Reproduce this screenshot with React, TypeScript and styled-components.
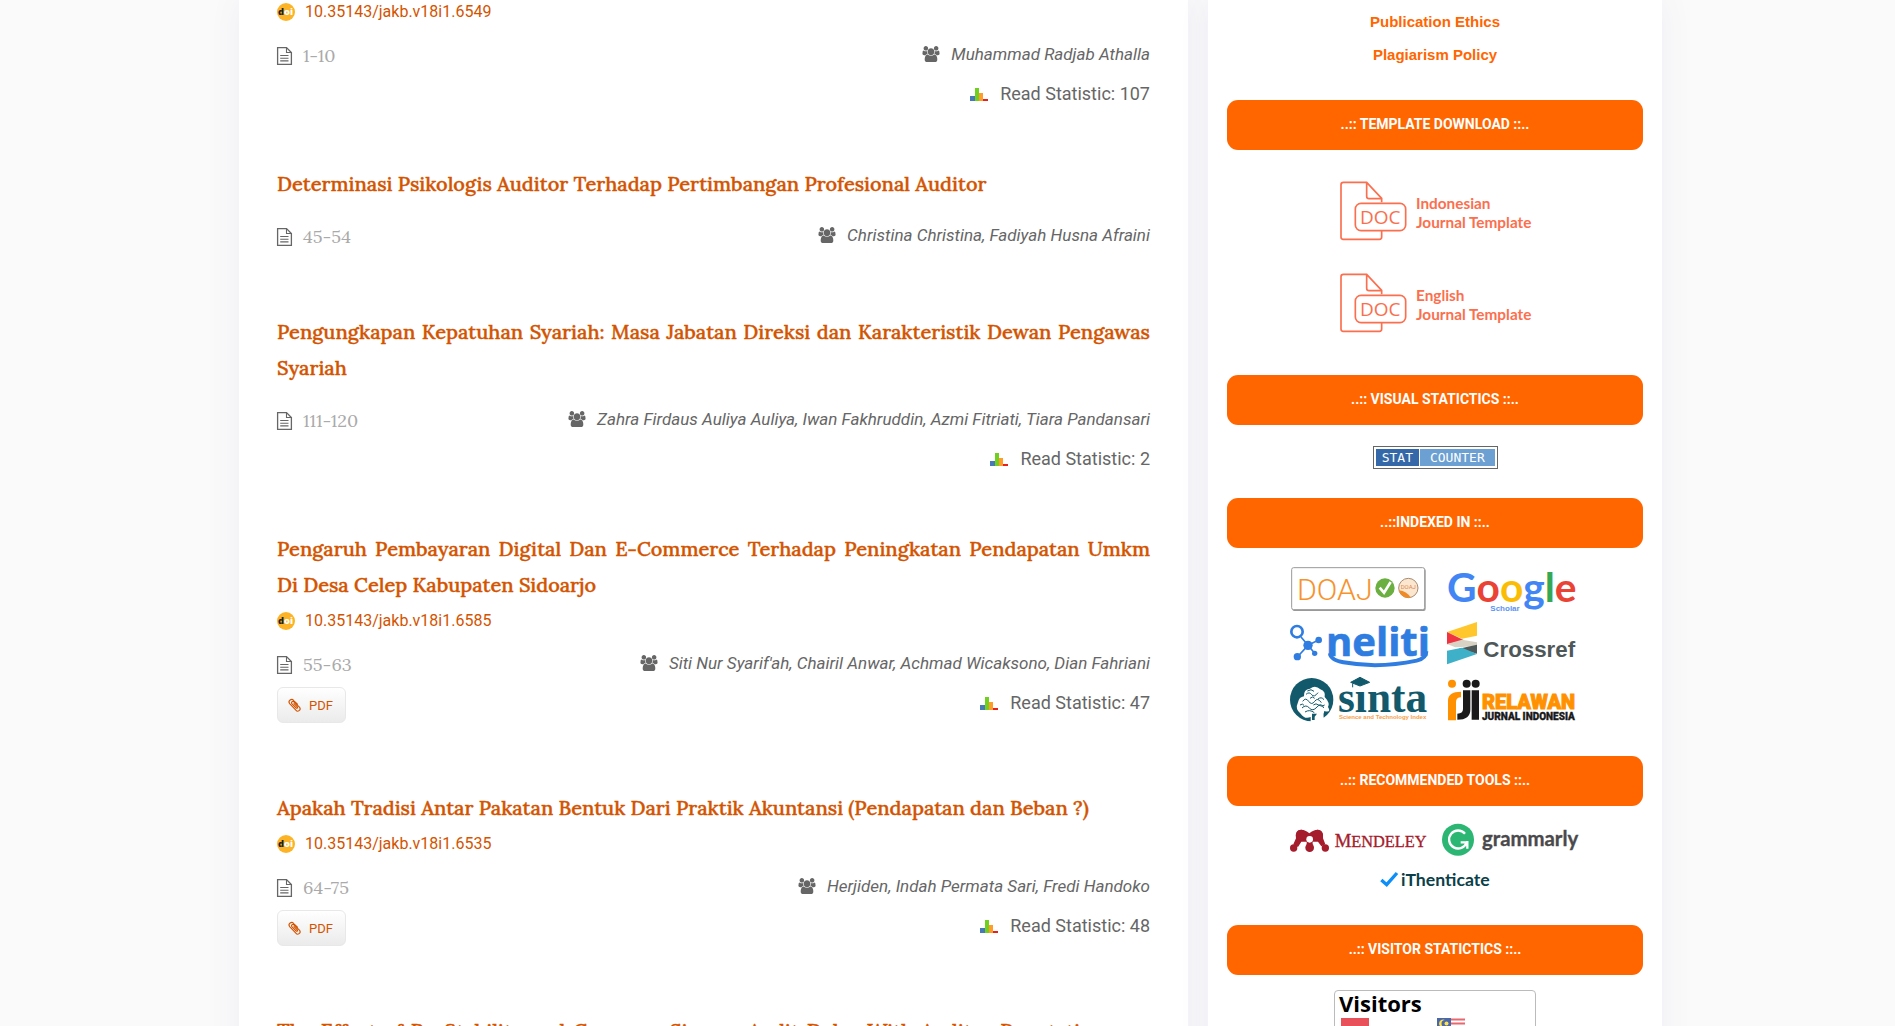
import React from "react";
import styled, { createGlobalStyle } from "styled-components";

const GlobalStyle = createGlobalStyle`
  * { box-sizing: border-box; }
  body {
    margin: 0;
    background: #fafafa;
    color: #666;
    font-family: Roboto, "Liberation Sans", sans-serif;
  }
  a { text-decoration: none; }
  svg { display: block; overflow: visible; }
`;

const Page = styled.div`
  height: 100vh;
  overflow: hidden;
  padding-left: 6px;
`;

const Columns = styled.div`
  display: grid;
  grid-template-columns: 949fr 454fr;
  gap: 20px;
  max-width: 1423px;
  min-height: 100%;
  margin: 0 auto;
`;

const Main = styled.main`
  background: #fff;
  padding: 0 38px;
  box-shadow: 0 0 30px rgba(80, 80, 180, 0.07);
`;

const Sidebar = styled.aside`
  background: #fff;
  padding: 5px 19px 0;
  box-shadow: 0 0 30px rgba(80, 80, 180, 0.07);
`;

const Article = styled.article`
  margin-bottom: 52px;
`;

const Title = styled.h3`
  margin: 0;
  font: 500 20px/36px Lora, "Liberation Serif", serif;
  -webkit-text-stroke: 0.4px #d35400;
  text-align: justify;
  a { color: #d35400; }
`;

const Doi = styled.a`
  display: flex;
  align-items: center;
  gap: 10px;
  padding-top: 9px;
  font-size: 16px;
  line-height: 18px;
  color: #d35400;
  &:first-child { padding-top: 3px; }
`;

const Meta = styled.div`
  display: flex;
  justify-content: space-between;
  margin-top: 21px;
`;

const Pages = styled.div`
  display: flex;
  align-items: center;
  gap: 11px;
  font: 18px/28px Lora, "Liberation Serif", serif;
  color: #aaa;
`;

const PdfLink = styled.a`
  display: flex;
  align-items: center;
  gap: 8px;
  width: 69px;
  height: 36px;
  margin: 8px 0 15px;
  padding-left: 10px;
  border: 1px solid #e8e8e8;
  border-radius: 6px;
  background: linear-gradient(#fff, #ebebeb);
  font-size: 13px;
  color: #d35400;
`;

const Credits = styled.div`
  display: flex;
  flex-direction: column;
  align-items: flex-end;
`;

const Authors = styled.div`
  display: flex;
  align-items: center;
  gap: 11px;
  padding-bottom: 15px;
  font-size: 17px;
  font-style: italic;
  line-height: 24px;
`;

const ReadCount = styled.div`
  display: flex;
  align-items: center;
  gap: 12px;
  padding-bottom: 7px;
  font-size: 18px;
  line-height: 26px;
`;

const PolicyLink = styled.a`
  display: block;
  font: 700 15px/33px Arial, "Liberation Sans", sans-serif;
  text-align: center;
  color: #f60;
`;

const BlockTitle = styled.h2`
  margin: 0;
  padding-bottom: 2px;
  border-radius: 11px;
  background: #f60;
  font-size: 14px;
  line-height: 48px;
  font-weight: 700;
  text-align: center;
  color: #fff;
`;

const Block = styled.section<{ $top: number; $body: number }>`
  margin-top: ${(p) => p.$top}px;
  ${BlockTitle} { margin-bottom: ${(p) => p.$body}px; }
`;

const Templates = styled.div`
  display: flex;
  flex-direction: column;
  align-items: center;
  gap: 32px;
`;

const StatBadge = styled.a`
  display: flex;
  gap: 1px;
  width: 125px;
  height: 23px;
  margin: 0 auto;
  padding: 2px;
  border: 1px solid #666;
  font: 13px/17px "DejaVu Sans Mono", "Liberation Mono", monospace;
  text-align: center;
  color: #fff;
`;

const BadgePart = styled.span<{ $bg: string; $grow: number }>`
  flex: ${(p) => p.$grow} 1 0;
  background: ${(p) => p.$bg};
`;

const LogoGrid = styled.div`
  display: grid;
  grid-template-columns: 138px 138px;
  justify-content: center;
  gap: 10px 14px;
`;

const ToolRow = styled.div`
  display: flex;
  flex-wrap: wrap;
  justify-content: center;
  gap: 13px 14px;
  max-width: 320px;
  margin: 0 auto;
`;

const Visitors = styled.div`
  width: 202px;
  margin: 0 auto;
  padding: 0 4px;
  border: 1px solid #bbb;
  border-radius: 4px;
  color: #000;
  font: 700 22px/25px "Open Sans", "Noto Sans", sans-serif;
`;

const Flags = styled.div`
  display: grid;
  grid-template-columns: 96px 96px;
  padding: 2px 2px 0;
`;

const DoiIcon = () => (
  <svg width="18" height="18" viewBox="0 0 54 54" aria-hidden="true">
    <circle cx="27" cy="27" r="27" fill="#fcb426" />
    <text x="3" y="36" fontFamily="Open Sans, sans-serif" fontWeight="800" fontSize="28" fill="#231f20">
      d<tspan fill="#fff">oi</tspan>
    </text>
  </svg>
);

const FileIcon = () => (
  <svg width="15" height="18" viewBox="0 0 15 18" fill="none" stroke="#666" aria-hidden="true">
    <path d="M.6 .6H9.5L14.4 5.5V17.4H.6Z" strokeWidth="1.3" />
    <path d="M9.5 .6V5.5H14.4M3.2 8.5H11.5M3.2 11.2H11.5M3.2 13.9H11.5" strokeWidth="1.1" />
  </svg>
);

const ClipIcon = () => (
  <svg width="13" height="13" viewBox="0 0 24 24" fill="none" stroke="#d35400" strokeWidth="2" strokeLinecap="round" aria-hidden="true">
    <path d="M17.500 9.500L10.500 2.800A4 4 0 0 0 3 8.500L14.500 20.500A4.300 4.300 0 0 0 21.500 15.500L11 5.500A2.400 2.400 0 0 0 7 8.500L15.500 17A1.500 1.500 0 0 0 17.500 15L11 8.500" />
  </svg>
);

const UsersIcon = () => (
  <svg width="18" height="16" viewBox="0 -256 1920 1792" fill="#666" aria-hidden="true">
    <path d="M593 640q-162 5-265 128h-134q-82 0-138-40.5t-56-118.5q0-353 124-353 6 0 43.5 21t97.5 42.5 119 21.5q67 0 133-23-5 37-5 66 0 139 81 256zm1071 637q0 120-73 189.5t-194 69.5h-874q-121 0-194-69.5t-73-189.5q0-53 3.5-103.5t14-109 26.5-108.5 43-97.5 62-81 85.5-53.5 111.5-20q10 0 43 21.5t73 48 107 48 135 21.5 135-21.5 107-48 73-48 43-21.5q61 0 111.5 20t85.5 53.5 62 81 43 97.5 26.5 108.5 14 109 3.5 103.5zm-1024-1277q0 106-75 181t-181 75-181-75-75-181 75-181 181-75 181 75 75 181zm704 384q0 159-112.5 271.5t-271.5 112.5-271.5-112.5-112.5-271.5 112.5-271.5 271.5-112.5 271.5 112.5 112.5 271.5zm576 225q0 78-56 118.5t-138 40.5h-134q-103-123-265-128 81-117 81-256 0-29-5-66 66 23 133 23 59 0 119-21.5t97.5-42.5 43.5-21q124 0 124 353zm-128-609q0 106-75 181t-181 75-181-75-75-181 75-181 181-75 181 75 75 181z" />
  </svg>
);

const ChartIcon = () => (
  <svg width="18" height="13" viewBox="0 0 18 13" aria-hidden="true">
    <path d="M0 8h5v5H0z" fill="#4878b8" />
    <path d="M5 0h4v13H5z" fill="#6fd01f" />
    <path d="M9 5h4v8H9z" fill="#ff9c2a" />
    <path d="M13 11h5v2h-5z" fill="#e8201c" />
  </svg>
);

const DocLogo = ({ first }: { first: string }) => (
  <svg width="190" height="60" viewBox="0 0 570 180" fill="none" stroke="#fb6f4e" strokeWidth="5" role="img">
    <path d="M125 64V52L80 4H10Q3 4 3 11V168Q3 175 10 175H118Q125 175 125 168V150M80 4V46Q80 53 87 53H125" />
    <rect x="46" y="67" width="151" height="82" rx="17" />
    <g fill="#fb6f4e" stroke="none">
      <text x="60" y="129" fontFamily="Open Sans, sans-serif" fontSize="57">DOC</text>
      <g fontFamily="Lato, sans-serif" fontWeight="700" fontSize="46">
        <text x="228" y="84">{first}</text>
        <text x="228" y="140">Journal Template</text>
      </g>
    </g>
  </svg>
);

const Doaj = () => (
  <svg width="138" height="45" viewBox="0 0 414 135">
    <rect x="7" y="5" width="400" height="127" rx="6" fill="#999" />
    <rect x="5" y="2" width="399" height="126" rx="6" fill="#fff" stroke="#999" strokeWidth="3" />
    <text x="21" y="98" fontFamily="Roboto, sans-serif" fontWeight="300" fontSize="91" fill="#f7922c">DOAJ</text>
    <circle cx="285" cy="63" r="29" fill="#6aaf3f" />
    <path d="M269 62L282 77L302 45" fill="none" stroke="#fff" strokeWidth="8" />
    <circle cx="355" cy="63" r="29" fill="#fbe6d0" stroke="#a98a70" strokeWidth="3" />
    <path d="M327 70Q350 72 362 92Q334 96 327 70Z" fill="#f08a24" />
    <text x="332" y="66" fontFamily="Roboto, sans-serif" fontSize="18" fill="#e08a4c">DOAJ</text>
  </svg>
);

const Google = () => (
  <svg width="138" height="45" viewBox="0 0 414 135">
    <text x="15" y="104" fontFamily="Lato, sans-serif" fontWeight="700" fontSize="122" fill="#4285f4">
      G<tspan fill="#ea4335">o</tspan><tspan fill="#fbbc05">o</tspan>g<tspan fill="#34a853">l</tspan><tspan fill="#ea4335">e</tspan>
    </text>
    <text x="145" y="133" fontFamily="Liberation Sans, sans-serif" fontWeight="700" fontSize="24" fill="#5b93f5">Scholar</text>
  </svg>
);

const Neliti = () => (
  <svg width="138" height="45" viewBox="0 0 414 135" fill="#2f7de1">
    <g stroke="#2f7de1" fill="none">
      <path d="M33 45L54 70L86 54M54 70L22 105M54 70L74 94" strokeWidth="5" />
      <circle cx="21" cy="29" r="17" strokeWidth="8" />
      <path d="M120 94Q122 114 160 121Q265 140 380 116Q409 109 409 88" strokeWidth="12" />
    </g>
    <circle cx="54" cy="70" r="14" /><circle cx="86" cy="54" r="10" />
    <circle cx="22" cy="104" r="11" /><circle cx="74" cy="94" r="8" />
    <text x="108" y="101" fontFamily="Open Sans, sans-serif" fontWeight="700" fontSize="120" stroke="#2f7de1" strokeWidth="2">neliti</text>
  </svg>
);

const Crossref = () => (
  <svg width="138" height="45" viewBox="0 0 414 135">
    <path d="M15 30L105 0V41L60 50L15 30Z" fill="#ffc72c" />
    <path d="M15 30L66 55L15 67Z" fill="#ef3340" />
    <path d="M60 53L105 61V73L40 76L15 66Z" fill="#d8d2c4" />
    <path d="M105 68V95L50 80Z" fill="#4f5858" />
    <path d="M15 86L60 77L105 96L15 127Z" fill="#3eb1c8" />
    <text x="124" y="104" fontFamily="Liberation Sans, sans-serif" fontWeight="700" fontSize="67" fill="#4f5858">Crossref</text>
  </svg>
);

const Sinta = () => (
  <svg width="138" height="45" viewBox="0 0 414 135">
    <circle cx="65" cy="68" r="65" fill="#11596b" />
    <path d="M24 76Q27 60 42 58Q40 37 60 35Q76 22 91 37Q108 44 104 60Q121 78 114 90Q125 108 103 102Q96 120 108 135H62V120Q44 128 32 110Q14 97 24 76Z" fill="#fff" />
    <path d="M38 73q9-13 18 0t18 0 20 4M48 52q10-9 17 1t19-6M36 93q12-12 22 0t23-3 20 3M60 64q8-8 14 0M45 105q14-9 28 2M52 42q12-8 20 1M84 66q10-8 18 2M30 84q8-6 12 1M70 84q8-7 16 0t18 0" fill="none" stroke="#11596b" strokeWidth="3" />
    <path d="M66 110h15l-7 9v10h-8z" fill="#11596b" />
    <text x="144" y="106" fontFamily="Liberation Serif, serif" fontWeight="700" fontSize="130" fill="#11596b">sınta</text>
    <path d="M182 16L210 1L239 16L210 27ZM188 19V31" fill="#11596b" stroke="#11596b" strokeWidth="3" />
    <text x="147" y="125" fontFamily="Liberation Sans, sans-serif" fontWeight="700" fontSize="18" fill="#f7a04a">Science and Technology Index</text>
  </svg>
);

const Relawan = () => (
  <svg width="138" height="45" viewBox="0 0 414 135">
    <circle cx="30" cy="20" r="12" fill="#ff9100" />
    <path d="M18 130V70Q18 44 57 44V61Q42 61 42 76V130Z" fill="#ff9100" />
    <g fill="#1a1a1a">
      <circle cx="74" cy="20" r="12" /><circle cx="101" cy="20" r="12" />
      <path d="M63 40H85V98Q85 128 46 128V110Q63 110 63 96ZM89 40H111V128H89Z" />
      <text x="120" y="129" fontFamily="Roboto, sans-serif" fontWeight="900" fontSize="30" stroke="#1a1a1a">JURNAL INDONESIA</text>
    </g>
    <text x="120" y="95" fontFamily="Roboto, sans-serif" fontWeight="900" fontSize="60" fill="#ff9100" stroke="#ff9100" strokeWidth="3">RELAWAN</text>
  </svg>
);

const Mendeley = () => (
  <svg width="138" height="35" viewBox="0 0 414 105" fill="#a51c2c">
    <path d="M18 46Q14 20 33 20Q46 20 58 31Q70 20 84 20Q101 22 99 46L106 64L94 70L84 56L68 56V76H50V56L34 56L24 72L10 64Z" />
    <circle cx="34" cy="36" r="16" /><circle cx="83" cy="36" r="16" />
    <circle cx="11" cy="75" r="11" /><circle cx="59" cy="74" r="13" /><circle cx="106" cy="75" r="11" />
    <circle cx="59" cy="49" r="10" fill="#fff" />
    <text x="134" y="72" fontFamily="Liberation Serif, serif" fontSize="56" stroke="#a51c2c">M<tspan fontSize="49">ENDELEY</tspan></text>
  </svg>
);

const Grammarly = () => (
  <svg width="138" height="35" viewBox="0 0 414 105">
    <circle cx="48" cy="50" r="48" fill="#2bb673" />
    <path d="M69 32A27 27 0 1 0 74 58H56M76 54V77" fill="none" stroke="#fff" strokeWidth="7" />
    <text x="120" y="68" fontFamily="Lato, sans-serif" fontWeight="700" fontSize="61" fill="#4a4a4c" stroke="#4a4a4c">grammarly</text>
  </svg>
);

const IThenticate = () => (
  <svg width="111" height="18" viewBox="0 0 333 54">
    <path d="M4 27L20 41L51 6" fill="none" stroke="#0c8ff8" strokeWidth="10" />
    <text x="63" y="44" fontFamily="Lato, sans-serif" fontWeight="700" fontSize="53" fill="#0b3f49">iThenticate</text>
  </svg>
);

const IndonesiaFlag = () => (
  <svg width="28" height="19" viewBox="0 0 28 19">
    <path d="M0 0h28v10H0z" fill="#e8505a" /><path d="M0 10h28v9H0z" fill="#f4f4f4" />
  </svg>
);

const MalaysiaFlag = () => (
  <svg width="28" height="19" viewBox="0 0 28 19">
    <path d="M0 0h28v19H0z" fill="#fff" />
    <path d="M0 1.5h28M0 5.5h28M0 9.500h28M0 13.500h28M0 17.500h28" stroke="#e8686e" strokeWidth="2" />
    <path d="M0 0h14v11H0z" fill="#4a68a8" />
    <path d="M8 2A4 4 0 1 0 8 9A3.500 3.500 0 1 1 8 2Z" fill="#ffe04a" /><circle cx="9.500" cy="5.500" r="2" fill="#ffe04a" />
  </svg>
);

type Entry = { title?: string; doi?: string; pages: string; authors: string; reads?: number; pdf?: boolean };

const entries: Entry[] = [
  { doi: "10.35143/jakb.v18i1.6549", pages: "1-10", authors: "Muhammad Radjab Athalla", reads: 107 },
  { title: "Determinasi Psikologis Auditor Terhadap Pertimbangan Profesional Auditor", pages: "45-54", authors: "Christina Christina, Fadiyah Husna Afraini" },
  { title: "Pengungkapan Kepatuhan Syariah: Masa Jabatan Direksi dan Karakteristik Dewan Pengawas Syariah", pages: "111-120", authors: "Zahra Firdaus Auliya Auliya, Iwan Fakhruddin, Azmi Fitriati, Tiara Pandansari", reads: 2 },
  { title: "Pengaruh Pembayaran Digital Dan E-Commerce Terhadap Peningkatan Pendapatan Umkm Di Desa Celep Kabupaten Sidoarjo", doi: "10.35143/jakb.v18i1.6585", pages: "55-63", authors: "Siti Nur Syarif'ah, Chairil Anwar, Achmad Wicaksono, Dian Fahriani", reads: 47, pdf: true },
  { title: "Apakah Tradisi Antar Pakatan Bentuk Dari Praktik Akuntansi (Pendapatan dan Beban ?)", doi: "10.35143/jakb.v18i1.6535", pages: "64-75", authors: "Herjiden, Indah Permata Sari, Fredi Handoko", reads: 48, pdf: true },
];

const ArticleSummary = ({ entry }: { entry: Entry }) => (
  <Article>
    {entry.title && <Title><a href="#article">{entry.title}</a></Title>}
    {entry.doi && <Doi href="#doi"><DoiIcon />{entry.doi}</Doi>}
    <Meta>
      <div>
        <Pages><FileIcon />{entry.pages}</Pages>
        {entry.pdf && <PdfLink href="#pdf"><ClipIcon />PDF</PdfLink>}
      </div>
      <Credits>
        <Authors><UsersIcon />{entry.authors}</Authors>
        {entry.reads !== undefined && <ReadCount><ChartIcon />Read Statistic: {entry.reads}</ReadCount>}
      </Credits>
    </Meta>
  </Article>
);

export default function App() {
  return (
    <>
      <GlobalStyle />
      <Page>
        <Columns>
          <Main>
            {entries.map((entry) => <ArticleSummary key={entry.pages} entry={entry} />)}
            <Title><a href="#article">The Effect of Profitability and Company Size on Audit Delay With Auditor Reputation as a Moderating Variable</a></Title>
          </Main>
          <Sidebar>
            <PolicyLink href="#ethics">Publication Ethics</PolicyLink>
            <PolicyLink href="#plagiarism">Plagiarism Policy</PolicyLink>
            <Block $top={29} $body={31}>
              <BlockTitle>..:: TEMPLATE DOWNLOAD ::..</BlockTitle>
              <Templates>
                <a href="#template-id"><DocLogo first="Indonesian" /></a>
                <a href="#template-en"><DocLogo first="English" /></a>
              </Templates>
            </Block>
            <Block $top={42} $body={21}>
              <BlockTitle>..:: VISUAL STATICTICS ::..</BlockTitle>
              <StatBadge href="#statcounter">
                <BadgePart $bg="#3468a8" $grow={37}>STAT</BadgePart>
                <BadgePart $bg="#6c9fd2" $grow={63}>COUNTER</BadgePart>
              </StatBadge>
            </Block>
            <Block $top={29} $body={19}>
              <BlockTitle>..::INDEXED IN ::..</BlockTitle>
              <LogoGrid>
                <Doaj /><Google /><Neliti /><Crossref /><Sinta /><Relawan />
              </LogoGrid>
            </Block>
            <Block $top={34} $body={17}>
              <BlockTitle>..:: RECOMMENDED TOOLS ::..</BlockTitle>
              <ToolRow>
                <Mendeley /><Grammarly /><IThenticate />
              </ToolRow>
            </Block>
            <Block $top={36} $body={15}>
              <BlockTitle>..:: VISITOR STATICTICS ::..</BlockTitle>
              <Visitors>
                Visitors
                <Flags><IndonesiaFlag /><MalaysiaFlag /></Flags>
              </Visitors>
            </Block>
          </Sidebar>
        </Columns>
      </Page>
    </>
  );
}
